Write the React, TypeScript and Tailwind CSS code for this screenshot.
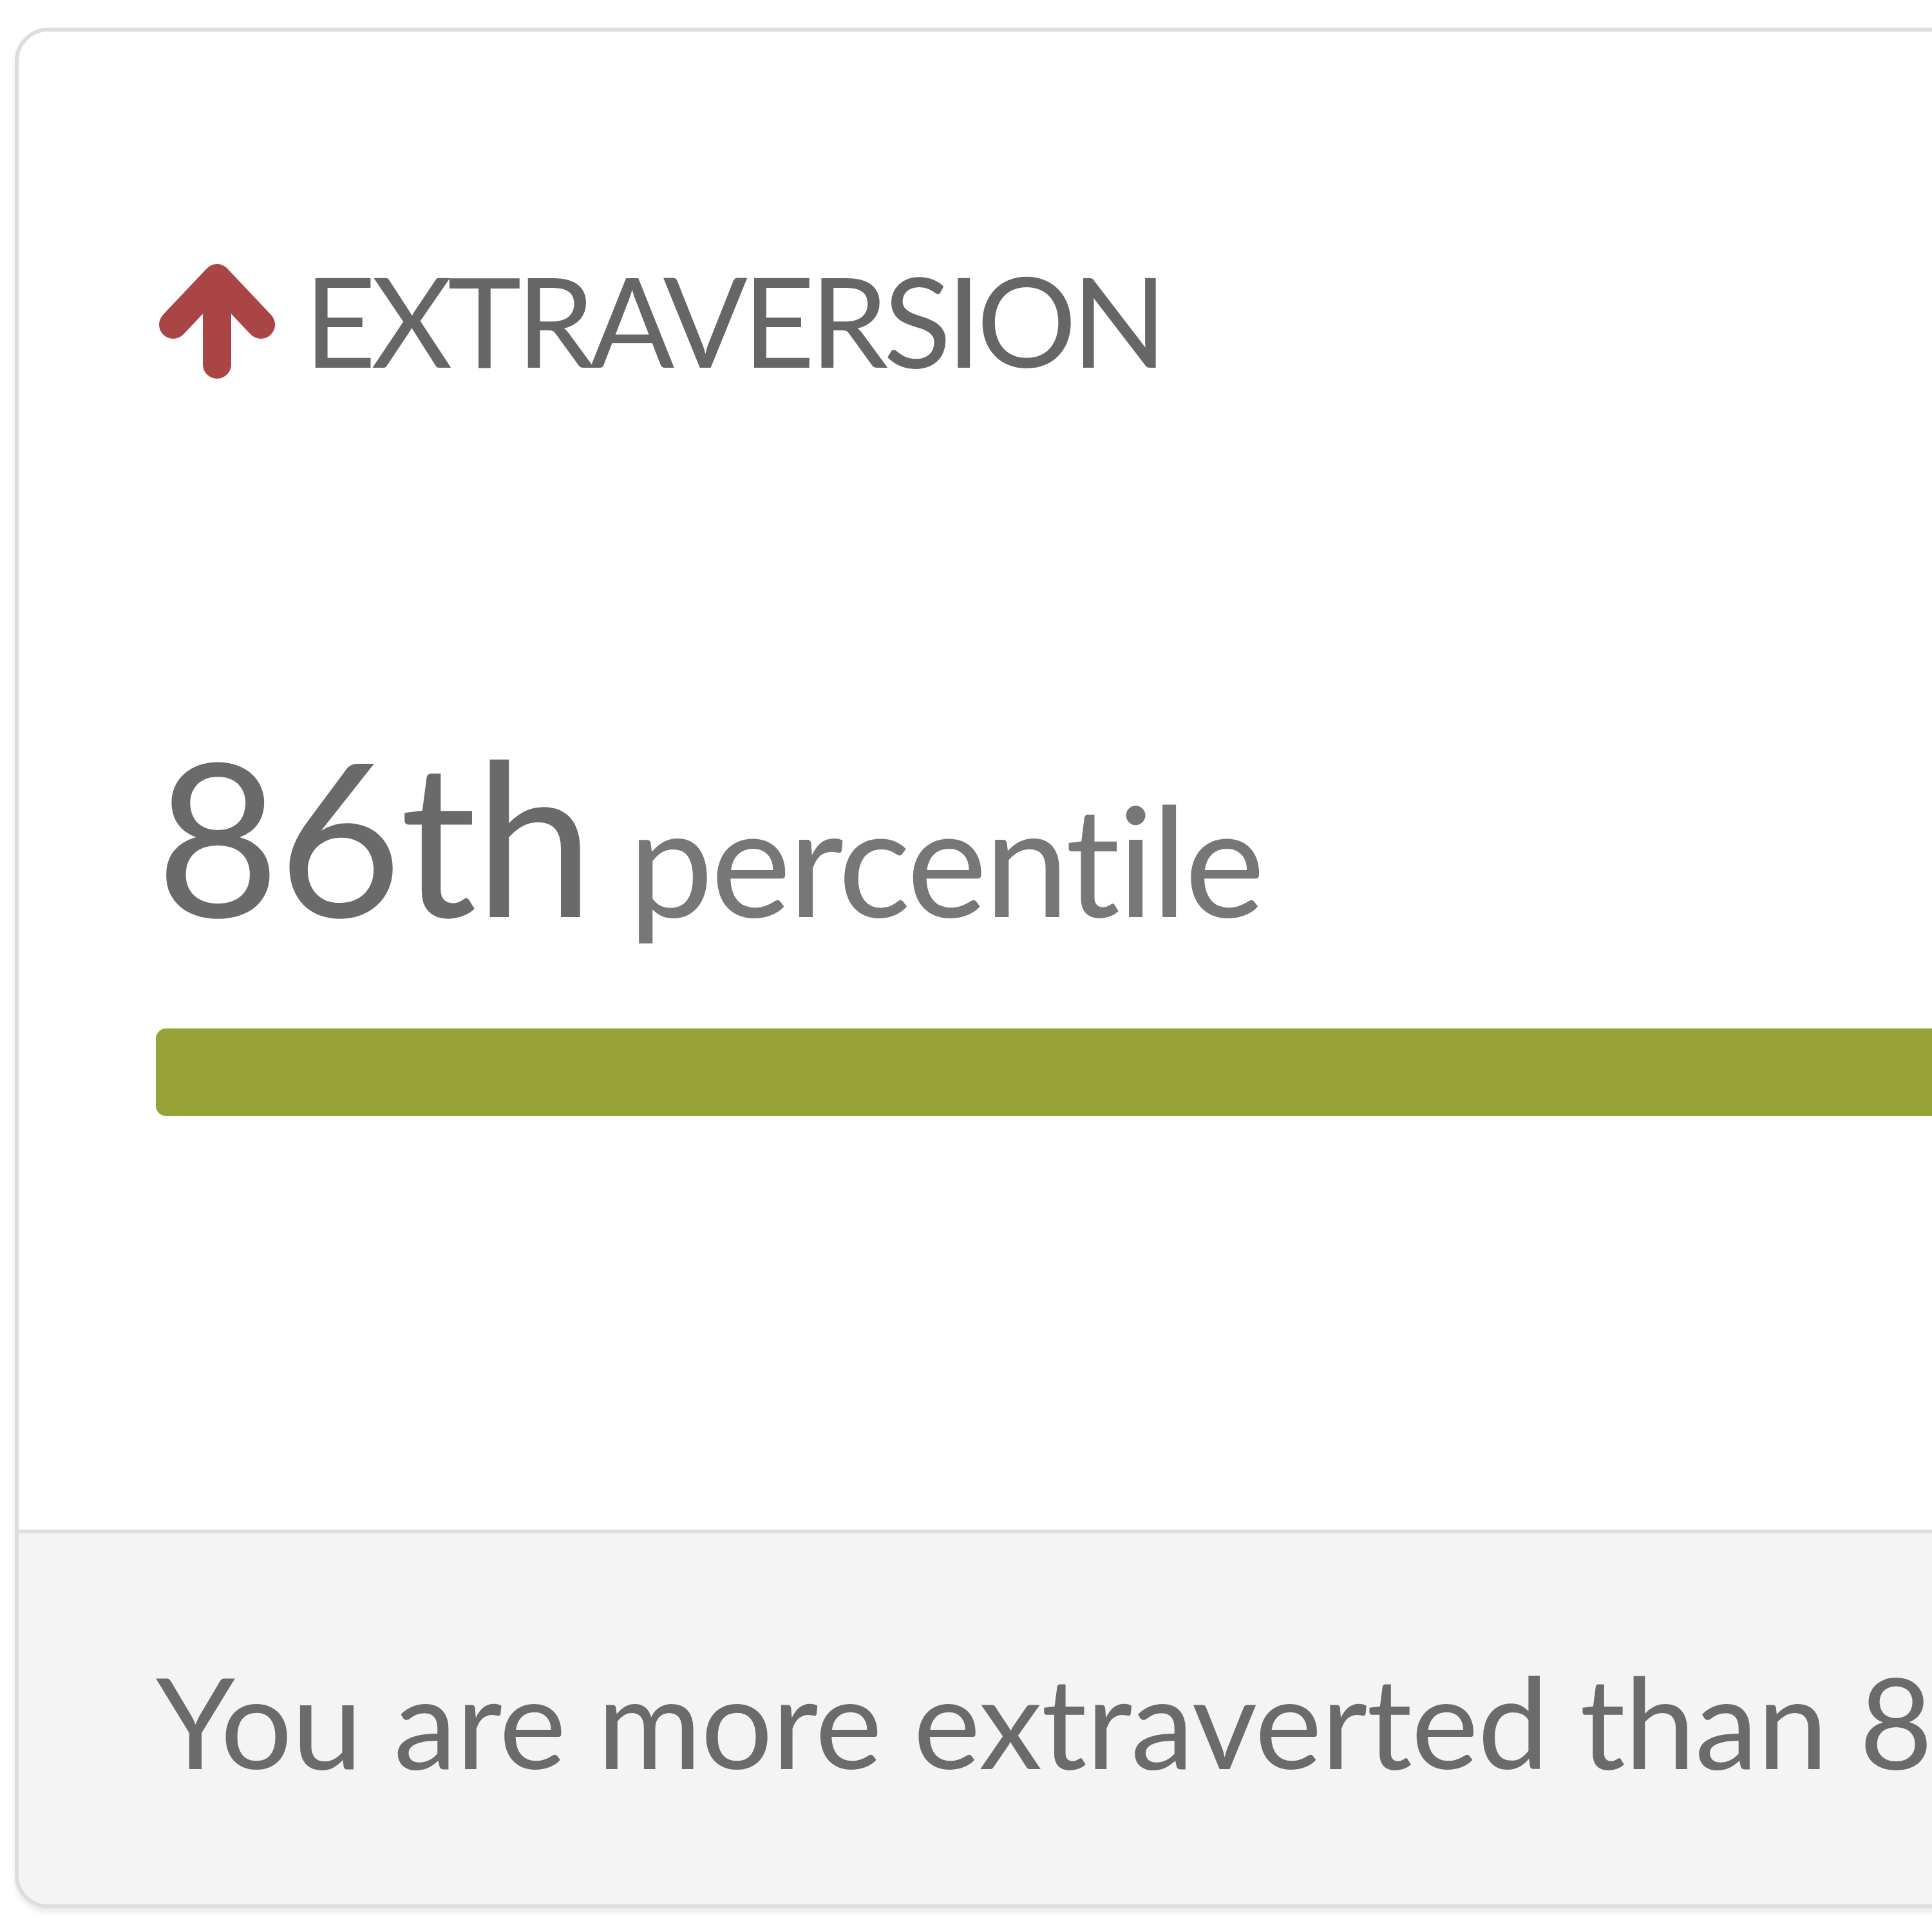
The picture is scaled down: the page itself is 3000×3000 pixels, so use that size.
import React from "react";

export default function App() {
  return (
    <div className="w-[3000px] h-[3000px] overflow-hidden bg-white pl-[23px] pt-[43px]" style={{ fontFamily: "Lato, 'Liberation Sans', sans-serif" }}>
      <div className="w-[3200px] rounded-[52px] border-[6px] border-[#dddddd] bg-white overflow-hidden shadow-[0_6px_10px_rgba(0,0,0,0.09)]">
        <div className="pl-[213px] pt-[347px] pb-[642px]">
          <div className="flex items-start h-[198px]">
            <svg width="190" height="198" viewBox="0 0 190 198" className="shrink-0">
              <path d="M95 170 L95 40 M27 108 L95 36 L163 108" fill="none" stroke="#aa4545" strokeWidth="44" strokeLinecap="round" strokeLinejoin="round" />
            </svg>
            <span className="ml-[40px] mt-[3px] text-[194px] leading-none tracking-[-7.5px] text-[#666666] whitespace-nowrap">EXTRAVERSION</span>
          </div>
          <div className="mt-[536px] h-[332px] leading-none whitespace-nowrap">
            <span className="text-[332px] leading-none tracking-[-3px] text-[#6a6a6a]">86th</span>
            <span className="ml-[56px] text-[236px] leading-none tracking-[-4px] text-[#777777]">percentile</span>
          </div>
          <div className="mt-[135px] h-[136px] rounded-[16px] bg-[#97a336]" />
        </div>
        <div className="border-t-[6px] border-[#e0e0e0] bg-[#f4f4f4] pl-[213px] pt-[192px] pb-[187px]">
          <p className="text-[197px] leading-none tracking-[-1px] text-[#6b6b6b] whitespace-nowrap">You are more extraverted than 86% of the population.</p>
        </div>
      </div>
    </div>
  );
}
